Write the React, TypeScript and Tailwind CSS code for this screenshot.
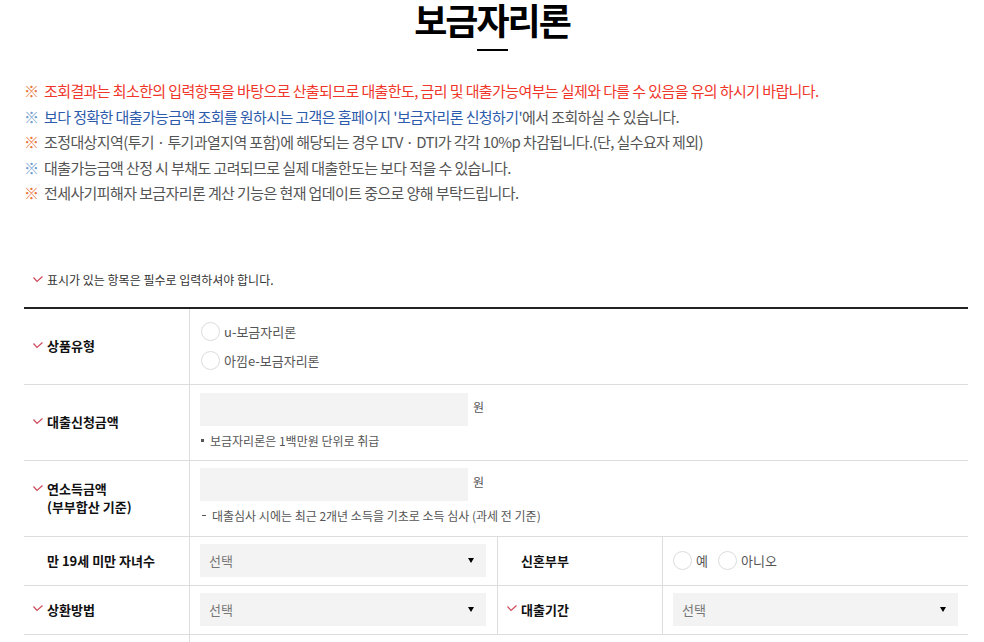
import React from 'react';

const font = { fontFamily: '"Noto Sans CJK KR", "Noto Sans", sans-serif' };

function Check() {
  return (
    <svg width="10" height="7" viewBox="0 0 10 7" className="shrink-0">
      <polyline points="0.5,1.5 4,5.5 9.5,0.5" fill="none" stroke="#d0495a" strokeWidth="1.2" />
    </svg>
  );
}

function Label({ text, check = true, sub }: { text: string; check?: boolean; sub?: string }) {
  return (
    <div className="flex items-center pl-[9px]">
      <div className="flex items-start">
        <div className="w-[10px] mr-[4px] h-[16px] flex items-center">{check && <Check />}</div>
        <div className="text-[13px] font-bold text-[#111] leading-[18px]">
          {text}
          {sub && <div>{sub}</div>}
        </div>
      </div>
    </div>
  );
}

function Radio({ text }: { text: string }) {
  return (
    <label className="flex items-center gap-[4px] text-[13px] text-[#555]">
      <span className="w-[19px] h-[19px] rounded-full border border-[#dcdcdc] bg-white" />
      {text}
    </label>
  );
}

function Select({ w }: { w: string }) {
  return (
    <div className={`${w} h-[33px] bg-[#f3f3f3] flex items-center justify-between px-[9px] text-[13px] text-[#777]`}>
      <span>선택</span>
      <span className="w-0 h-0 border-l-[3.5px] border-r-[3.5px] border-t-[5px] border-l-transparent border-r-transparent border-t-black mr-[3px]" />
    </div>
  );
}

const notices = [
  { mark: 'text-[#e8743b]', text: 'text-[#f0362a]', body: '조회결과는 최소한의 입력항목을 바탕으로 산출되므로 대출한도, 금리 및 대출가능여부는 실제와 다를 수 있음을 유의 하시기 바랍니다.' },
  { mark: 'text-[#6e9ccf]', text: 'text-[#555]', body: '' },
  { mark: 'text-[#e8743b]', text: 'text-[#555]', body: '조정대상지역(투기 · 투기과열지역 포함)에 해당되는 경우 LTV · DTI가 각각 10%p 차감됩니다.(단, 실수요자 제외)' },
  { mark: 'text-[#6e9ccf]', text: 'text-[#555]', body: '대출가능금액 산정 시 부채도 고려되므로 실제 대출한도는 보다 적을 수 있습니다.' },
  { mark: 'text-[#e8743b]', text: 'text-[#555]', body: '전세사기피해자 보금자리론 계산 기능은 현재 업데이트 중으로 양해 부탁드립니다.' },
];

export default function App() {
  return (
    <div className="w-[984px] h-[642px] overflow-hidden bg-white" style={font}>
      <div className="flex flex-col items-center pt-[1px]">
        <h1 className="text-[36px] font-bold text-black leading-[36px] tracking-[-2px]">보금자리론</h1>
        <div className="w-[31px] h-[2px] bg-black mt-[12px]" />
      </div>

      <ul className="ml-[24px] mt-[27px] text-[15px] leading-[25.5px] tracking-[-0.6px]">
        {notices.map((n, i) => (
          <li key={i} className="flex">
            <span className={`${n.mark} w-[20px] tracking-normal`}>※</span>
            {i === 1 ? (
              <span className="text-[#555]">
                <span className="text-[#2d5bab]">보다 정확한 대출가능금액 조회를 원하시는 고객은 홈페이지 '보금자리론 신청하기'</span>에서 조회하실 수 있습니다.
              </span>
            ) : (
              <span className={n.text}>{n.body}</span>
            )}
          </li>
        ))}
      </ul>

      <div className="ml-[33px] mt-[65px] flex items-center gap-[4px] text-[12px] text-[#333]">
        <Check />
        <span>표시가 있는 항목은 필수로 입력하셔야 합니다.</span>
      </div>

      <div className="ml-[24px] w-[944px] mt-[18px] border-t-2 border-[#222]">
        <div className="grid grid-cols-[165px_1fr] h-[76px] border-b border-[#ddd]">
          <Label text="상품유형" />
          <div className="border-l border-[#ddd] pl-[11px] flex flex-col justify-center gap-[9px]">
            <Radio text="u-보금자리론" />
            <Radio text="아낌e-보금자리론" />
          </div>
        </div>

        <div className="grid grid-cols-[165px_1fr] h-[76px] border-b border-[#ddd]">
          <Label text="대출신청금액" />
          <div className="border-l border-[#ddd] pl-[10px] pt-[8px]">
            <div className="flex items-center">
              <div className="w-[268px] h-[33px] bg-[#f3f3f3]" />
              <span className="ml-[5px] text-[12px] text-[#555] -mt-[4px]">원</span>
            </div>
            <div className="flex items-center mt-[6px] text-[12px] text-[#555]">
              <span className="w-[3px] h-[3px] bg-[#555] ml-[1px] mr-[6px]" />
              보금자리론은 1백만원 단위로 취급
            </div>
          </div>
        </div>

        <div className="grid grid-cols-[165px_1fr] h-[76px] border-b border-[#ddd]">
          <Label text="연소득금액" sub="(부부합산 기준)" />
          <div className="border-l border-[#ddd] pl-[10px] pt-[7px]">
            <div className="flex items-center">
              <div className="w-[268px] h-[33px] bg-[#f3f3f3]" />
              <span className="ml-[5px] text-[12px] text-[#555] -mt-[4px]">원</span>
            </div>
            <div className="flex items-center mt-[6px] text-[12px] text-[#555]">
              <span className="w-[4px] h-[1px] bg-[#555] ml-[2px] mr-[6px]" />
              대출심사 시에는 최근 2개년 소득을 기초로 소득 심사 (과세 전 기준)
            </div>
          </div>
        </div>

        <div className="grid grid-cols-[165px_308px_165px_1fr] h-[49px] border-b border-[#ddd]">
          <Label text="만 19세 미만 자녀수" check={false} />
          <div className="border-l border-[#ddd] pl-[10px] flex items-center">
            <Select w="w-[286px]" />
          </div>
          <div className="border-l border-[#ddd] flex items-center">
            <Label text="신혼부부" check={false} />
          </div>
          <div className="border-l border-[#ddd] pl-[10px] flex items-center gap-[10px]">
            <Radio text="예" />
            <Radio text="아니오" />
          </div>
        </div>

        <div className="grid grid-cols-[165px_308px_165px_1fr] h-[49px] border-b border-[#ddd]">
          <Label text="상환방법" />
          <div className="border-l border-[#ddd] pl-[10px] flex items-center">
            <Select w="w-[286px]" />
          </div>
          <div className="border-l border-[#ddd] flex items-center">
            <Label text="대출기간" />
          </div>
          <div className="border-l border-[#ddd] pl-[10px] flex items-center">
            <Select w="w-[285px]" />
          </div>
        </div>
        <div className="grid grid-cols-[165px_1fr] h-[20px]">
          <div />
          <div className="border-l border-[#ddd]" />
        </div>
      </div>
    </div>
  );
}
